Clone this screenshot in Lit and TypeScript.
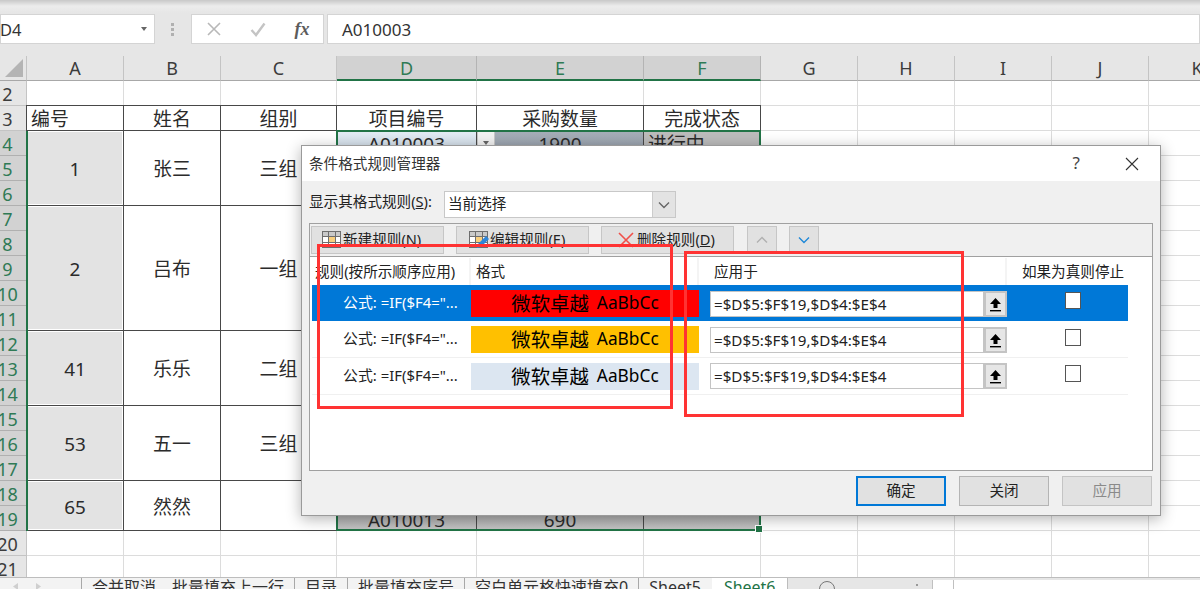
import { LitElement, html, css, svg, nothing } from "lit";
import { customElement } from "lit/decorators.js";

const COLS = ["A", "B", "C", "D", "E", "F", "G", "H", "I", "J", "K"];
const ROWS = Array.from({ length: 20 }, (_, i) => i + 2);
const MERGED: [number, number, string, string, string][] = [
  [4, 3, "1", "张三", "三组"],
  [7, 5, "2", "吕布", "一组"],
  [12, 3, "41", "乐乐", "二组"],
  [15, 3, "53", "五一", "三组"],
  [18, 2, "65", "然然", ""],
];
const RULES = [
  { cls: "sel", sw: "red" },
  { cls: "", sw: "amber" },
  { cls: "", sw: "pale" },
];

const gridIcon = (pencil: boolean) => html`<svg class="tool-ic" width="22" height="20" viewBox="0 0 22 20">
  <rect x="1.5" y="1.5" width="18" height="16" fill="#fff" stroke="#6e6e6e"></rect>
  <rect x="2" y="2" width="17" height="4" fill="#c9c9c9"></rect>
  <rect x="7.5" y="6.5" width="7" height="6" fill="#f8cf7e" stroke="#e39a36"></rect>
  <path d="M1.5 6.5H19.5M1.5 12.5H19.5M7.5 1.5V17.5M14.5 1.5V17.5" fill="none" stroke="#6e6e6e"></path>
  ${pencil ? svg`<path d="M9 18l1-4 8-8 3 3-8 8z" fill="#2f86d8"></path>` : nothing}
</svg>`;

@customElement("app-root")
export class AppRoot extends LitElement {
  static styles = css`
    :host {
      display: block;
      width: 1200px;
      height: 589px;
      overflow: hidden;
      position: relative;
      background: #fff;
      font-family: "Noto Sans", "Noto Sans CJK SC", sans-serif;
      color: #2b2b2b;
    }
    .fbar {
      height: 56px;
      box-sizing: border-box;
      padding: 14px 0 12px;
      display: flex;
      background: linear-gradient(#c8c8c8 0, #ececec 6px, #e6e6e6 13px);
    }
    .box {
      background: #fff;
      border: 1px solid #d4d4d4;
      box-sizing: border-box;
      display: flex;
      align-items: center;
      height: 30px;
      font-size: 16.5px;
      color: #333;
    }
    .name { width: 155px; justify-content: space-between; padding-right: 7px; }
    .name span:first-child { margin-left: -1px; }
    .caret { width: 0; height: 0; border: 3.5px solid transparent; border-top: 4px solid #666; border-bottom: 0; }
    .dots { width: 35px; padding-right: 1px; box-sizing: content-box; display: flex; flex-direction: column; align-items: center; justify-content: center; gap: 2px; }
    .dots i { width: 3px; height: 3px; background: #b0b0b0; }
    .fx { width: 133px; display: grid; grid-template-columns: repeat(3, 44px); justify-items: center; margin-right: 3px; }
    .fx b { font: italic 700 18px "Liberation Serif", serif; color: #5c5c5c; }
    .formula { flex: 1; padding-left: 14px; font-size: 17px; }

    .sheet {
      height: 521px;
      overflow: hidden;
      display: grid;
      position: relative;
      grid-template-columns: 27px 97px 97px 116px 140px 167px 117px 97px 97px 97px 97px 97px;
      grid-auto-rows: 25px;
      font-size: 18.9px;
      line-height: 1;
    }
    .corner {
      background: #e6e6e6;
      border-right: 1px solid #c4c4c4;
      border-bottom: 1px solid #a8a8a8;
      box-sizing: border-box;
      display: flex;
      padding: 3px;
      justify-content: flex-end;
      align-items: flex-end;
    }
    .ch {
      background: #e6e6e6;
      border-right: 1px solid #c4c4c4;
      border-bottom: 1px solid #a8a8a8;
      box-sizing: border-box;
      display: flex;
      align-items: center;
      justify-content: center;
      font-size: 18px;
      color: #3c3c3c;
    }
    .ch.on { background: #d2d2d2; color: #2f7a55; border-bottom: 2px solid #217346; border-right-color: #b4b4b4; }
    .rh {
      background: #e6e6e6;
      border-bottom: 1px solid #c4c4c4;
      border-right: 1px solid #c4c4c4;
      box-sizing: border-box;
      padding: 1px 11px 0 0;
      display: flex;
      align-items: center;
      justify-content: center;
      font-size: 18px;
      color: #3c3c3c;
      overflow: hidden;
    }
    .rh.on { background: #d2d2d2; color: #2f7a55; border-bottom-color: #b0b0b0; }
    .c {
      border-right: 1px solid #dcdcdc;
      border-bottom: 1px solid #dcdcdc;
      box-sizing: border-box;
    }
    .t {
      border: 1px solid #484848;
      margin: -1px 0 0 -1px;
      display: flex;
      align-items: center;
      justify-content: center;
      padding-top: 3px;
      background: #fff;
      box-sizing: border-box;
      white-space: nowrap;
      overflow: hidden;
    }
    .t.left { justify-content: flex-start; padding-left: 4px; }
    .t.shade { background: #e3e3e3; box-shadow: inset 0 0 0 1px #fff; }
    .t.d4 { background: linear-gradient(#e4edf5, #cbd8e4); }
    .t.e4 { background: linear-gradient(#a6afb9, #959ea9); position: relative; }
    .t.f4 { background: #bcbcbc; }
    .t.low { background: linear-gradient(#a2a2a2, #c4c4c4); padding-top: 5px; }
    .drop {
      position: absolute;
      left: 0;
      top: 0;
      width: 18px;
      height: 24px;
      background: #f2f2f2;
      border: 1px solid #c8c8c8;
      box-sizing: border-box;
      display: flex;
      align-items: center;
      justify-content: center;
    }
    .sel-a { grid-column: 2; grid-row: 4 / 20; border-left: 2px solid #217346; margin-left: -1px; pointer-events: none; }
    .sel-d { grid-column: 5 / 8; grid-row: 4 / 20; border: 2px solid #217346; margin: -1px 0 0 -1px; position: relative; }
    .handle { position: absolute; right: -4px; bottom: -4px; width: 6px; height: 6px; background: #217346; border: 1px solid #fff; }

    .tabs {
      height: 12px;
      background: #f3f3f3;
      border-top: 1px solid #bdbdbd;
      box-sizing: border-box;
      display: flex;
      font-size: 16px;
      line-height: 19px;
      color: #333;
      overflow: hidden;
    }
    .nav { width: 81px; flex: none; display: flex; gap: 18px; padding: 5px 0 0 12px; box-sizing: border-box; }
    .nav svg { display: block; }
    .tab { padding: 0 10px; white-space: nowrap; border-left: 1px solid #a8a8a8; height: 24px; box-sizing: border-box; }
    .tab b { font-weight: 400; margin-right: 16px; }
    .tab.s5 { padding-right: 11px; }
    .tab.active { background: #fff; color: #217346; border: 0; padding: 0 11px 0 12px; margin-top: -1px; line-height: 21px; }
    .rest { flex: 1; background: #e6e6e6; display: flex; border-left: 1px solid #bdbdbd; position: relative; }
    .plus { width: 16px; height: 16px; margin: 3px 0 0 31px; border: 1px solid #777; border-radius: 50%; box-sizing: border-box; flex: none; }
    .vd { width: 2px; height: 2px; background: #999; margin: 6px 0 0 81px; flex: none; }
    .hs { margin: 2px 0 0 14px; background: #fff; flex: 1; border-left: 1px solid #c0c0c0; }
    .hs i { display: block; width: 20px; height: 20px; border-right: 1px solid #c0c0c0; }

    .dlg {
      position: absolute;
      left: 301px;
      top: 145px;
      width: 860px;
      height: 371px;
      box-sizing: border-box;
      background: #f0f0f0;
      border: 1px solid #9a9a9a;
      box-shadow: 0 3px 14px rgba(0, 0, 0, 0.3);
      font-size: 14.6px;
      line-height: 1.2;
      color: #222;
      display: flex;
      flex-direction: column;
    }
    .title {
      height: 35px;
      flex: none;
      background: #fff;
      display: flex;
      align-items: center;
      padding-left: 7px;
      color: #333;
    }
    .title .sp { flex: 1; }
    .q { font-size: 17px; color: #444; margin-right: 45px; }
    .x { margin-right: 21px; display: block; }
    .pick { display: flex; align-items: center; padding: 10px 0 0 8px; height: 27px; flex: none; }
    .pick label { width: 134px; padding-bottom: 5px; margin-left: -1px; margin-right: 1px; }
    .select {
      width: 232px;
      height: 27px;
      box-sizing: border-box;
      background: #fff;
      border: 1px solid #c8c8c8;
      display: flex;
      align-items: center;
      justify-content: space-between;
      padding-left: 3px;
    }
    .select > span:first-child { padding-bottom: 2px; }
    .select .btn { width: 22px; height: 25px; background: #e3e3e3; border-left: 1px solid #ccc; display: flex; align-items: center; justify-content: center; }
    .panel {
      margin: 5px 7px 0 7px;
      height: 248px;
      flex: none;
      box-sizing: border-box;
      border: 1px solid #a0a0a0;
      display: flex;
      flex-direction: column;
    }
    .tools { height: 32px; flex: none; display: flex; padding: 2px 0 0 1px; box-sizing: border-box; gap: 12px; }
    .tbtn {
      height: 28px;
      width: 133px;
      box-sizing: border-box;
      background: #e1e1e1;
      border: 1px solid #c6c6c6;
      display: flex;
      align-items: center;
      justify-content: flex-start;
      padding-left: 9px;
      white-space: nowrap;
      overflow: hidden;
    }
    .tbtn.edit { padding-left: 11px; }
    .tbtn.del { padding-left: 16px; gap: 3px; }
    .tbtn.mini { width: 30px; padding: 0; justify-content: center; }
    .tbtn.first { margin-left: 1px; }
    .tool-ic { flex: none; }
    .list {
      flex: 1;
      background: #fff;
      border-top: 1px solid #a0a0a0;
      padding: 1px 0 0 2px;
    }
    .grid { display: grid; width: 816px; grid-template-columns: 159px 228px 11px 297px 11px 110px; align-items: stretch; }
    .head { height: 27px; }
    .head > div { display: flex; align-items: center; padding-left: 4px; border-right: 2px solid #f4f4f4; white-space: nowrap; box-sizing: border-box; }
    .head > div:first-child { padding-left: 3px; }
    .head .fmt { padding-left: 5px; }
    .head .stop { padding: 0; justify-content: center; border: 0; }
    .head .gap { padding: 0; border: 0; }
    .row { height: 37px; border-bottom: 1px solid #f0f0f0; box-sizing: border-box; }
    .row.sel { background: #0078d7; color: #fff; height: 36px; border: 0; }
    .rule { padding: 0 0 0 31px; display: flex; align-items: center; white-space: nowrap; font-size: 14.9px; }
    .swatch { margin: 5px 0 4px; display: flex; align-items: center; justify-content: center; gap: 8px; font-size: 17.3px; color: #000; }
    .swatch b { font-weight: 400; font-size: 19.4px; }
    .red { background: #ff0000; }
    .amber { background: #ffc000; }
    .pale { background: #dce6f1; }
    .range { display: flex; margin: 6px 0 4px; color: #222; font-size: 15.2px; }
    .row:last-child .range { margin: 5px 0 5px; }
    .range div { flex: 1; background: #fff; border: 1px solid #c4c4c4; box-sizing: border-box; padding: 1px 0 0 3px; display: flex; align-items: center; }
    .range .up { width: 23px; flex: none; padding: 0; justify-content: center; background: #e6e6e6; border: 2px solid #c4c4c4; }
    .chk { display: flex; justify-content: center; padding-top: 8px; box-sizing: border-box; }
    .row.sel .chk, .row:last-child .chk { padding-top: 7px; }
    .chk i { width: 16px; height: 17px; box-sizing: border-box; display: block; background: #fff; border: 1px solid #555; }
    .foot { display: flex; justify-content: flex-end; gap: 13px; padding: 5px 8px 0 0; }
    .fbtn { width: 90px; height: 30px; box-sizing: border-box; background: #e1e1e1; border: 1px solid #b4b4b4; display: flex; align-items: center; justify-content: center; }
    .fbtn.def { border: 2px solid #0078d7; }
    .fbtn.off { color: #8a8a8a; border-color: #c4c4c4; }

    .mark { position: absolute; box-sizing: border-box; border: 3px solid #ff3333; pointer-events: none; }
    .m1 { left: 317px; top: 244px; width: 356px; height: 165px; }
    .m2 { left: 684px; top: 251px; width: 280px; height: 166px; }
    u { text-underline-offset: 1px; }
  `;

  private renderSheet() {
    const cells = [];
    cells.push(html`<div class="corner"><svg width="18" height="18" viewBox="0 0 18 18"><polygon points="18,0 18,18 0,18" fill="#b4b4b4"></polygon></svg></div>`);
    for (const c of COLS) {
      const on = c === "D" || c === "E" || c === "F";
      cells.push(html`<div class="ch ${on ? "on" : ""}">${c}</div>`);
    }
    cells.push(html`<div></div>`);
    for (const r of ROWS) {
      const on = r >= 4 && r <= 19;
      cells.push(html`<div class="rh ${on ? "on" : ""}" style="grid-column:1;grid-row:${r}">${r}</div>`);
      for (let i = 0; i < 12; i++) {
        const inTable = r >= 3 && r <= 19 && i < 6;
        if (!inTable) cells.push(html`<div class="c" style="grid-column:${i + 2};grid-row:${r}"></div>`);
      }
    }
    const place = (col: number, row: number, span = 1) => `grid-column:${col};grid-row:${row} / span ${span}`;
    const head = ["编号", "姓名", "组别", "项目编号", "采购数量", "完成状态"];
    head.forEach((h, i) => cells.push(html`<div class="t ${i === 0 ? "left" : ""}" style=${place(i + 2, 3)}>${h}</div>`));
    for (const [row, span, a, b, c] of MERGED) {
      cells.push(html`<div class="t shade" style=${place(2, row, span)}>${a}</div>`);
      cells.push(html`<div class="t" style=${place(3, row, span)}>${b}</div>`);
      cells.push(html`<div class="t" style=${place(4, row, span)}>${c}</div>`);
    }
    cells.push(html`<div class="t d4" style=${place(5, 4)}>A010003</div>`);
    cells.push(html`<div class="t e4" style=${place(6, 4)}>
      <span class="drop"><span class="caret"></span></span>1900</div>`);
    cells.push(html`<div class="t f4 left" style=${place(7, 4)}>进行中</div>`);
    cells.push(html`<div class="t low" style=${place(5, 19)}>A010013</div>`);
    cells.push(html`<div class="t low" style=${place(6, 19)}>690</div>`);
    cells.push(html`<div class="t low" style=${place(7, 19)}></div>`);
    cells.push(html`<div class="sel-a"></div>`);
    cells.push(html`<div class="sel-d"><span class="handle"></span></div>`);
    return cells;
  }

  private renderDialog() {
    const chev = (c: string, d: string) => html`<svg width="14" height="8" viewBox="0 0 14 8"><path d=${d} fill="none" stroke=${c} stroke-width="1.4"></path></svg>`;
    const upload = html`<svg width="13" height="15" viewBox="0 0 13 15"><path d="M6.5 1L12 7H8.5V11H4.5V7H1Z" fill="#000"></path><rect x="1" y="13" width="11" height="1.4" fill="#000"></rect></svg>`;
    return html`<div class="dlg">
      <div class="title">
        <span>条件格式规则管理器</span><span class="sp"></span>
        <span class="q">?</span>
        <svg class="x" width="14" height="14" viewBox="0 0 14 14"><path d="M1 1L13 13M13 1L1 13" stroke="#333" stroke-width="1.1" fill="none"></path></svg>
      </div>
      <div class="pick">
        <label>显示其格式规则(<u>S</u>):</label>
        <div class="select"><span>当前选择</span><span class="btn">${chev("#666", "M2 1.5L7 6.5L12 1.5")}</span></div>
      </div>
      <div class="panel">
        <div class="tools">
          <div class="tbtn">${gridIcon(false)}<span>新建规则(<u>N</u>)</span></div>
          <div class="tbtn edit">${gridIcon(true)}<span>编辑规则(<u>E</u>)</span></div>
          <div class="tbtn del">
            <svg class="tool-ic" width="16" height="16" viewBox="0 0 16 16"><path d="M1 1L15 15M15 1L1 15" stroke="#f0504a" stroke-width="1.6" fill="none"></path></svg>
            <span>删除规则(<u>D</u>)</span></div>
          <div class="tbtn mini first">${chev("#b0b0b0", "M2 6.5L7 1.5L12 6.5")}</div>
          <div class="tbtn mini">${chev("#1e88d8", "M2 1.5L7 6.5L12 1.5")}</div>
        </div>
        <div class="list">
          <div class="grid head">
            <div>规则(按所示顺序应用)</div><div class="fmt">格式</div><div class="gap"></div><div>应用于</div><div class="gap"></div><div class="stop">如果为真则停止</div>
          </div>
          ${RULES.map(
            (r) => html`<div class="grid row ${r.cls}">
              <div class="rule">公式: =IF($F4="...</div>
              <div class="swatch ${r.sw}"><b>微软卓越</b><span>AaBbCc</span></div>
              <div></div>
              <div class="range"><div>=$D$5:$F$19,$D$4:$E$4</div><div class="up">${upload}</div></div>
              <div></div>
              <div class="chk"><i></i></div>
            </div>`
          )}
        </div>
      </div>
      <div class="foot">
        <div class="fbtn def">确定</div>
        <div class="fbtn">关闭</div>
        <div class="fbtn off">应用</div>
      </div>
    </div>`;
  }

  render() {
    return html`
      <div class="fbar">
        <div class="box name"><span>D4</span><span class="caret"></span></div>
        <div class="dots"><i></i><i></i><i></i></div>
        <div class="box fx">
          <svg width="16" height="16" viewBox="0 0 16 16"><path d="M2 2L14 14M14 2L2 14" stroke="#b8b8b8" stroke-width="1.6" fill="none"></path></svg>
          <svg width="16" height="16" viewBox="0 0 16 16"><path d="M1.5 9L6 14L14.5 2.5" stroke="#c4c4c4" stroke-width="2.4" fill="none"></path></svg>
          <b>fx</b>
        </div>
        <div class="box formula">A010003</div>
      </div>
      <div class="sheet">${this.renderSheet()}</div>
      <div class="tabs">
        <div class="nav">
          <svg width="6" height="7" viewBox="0 0 6 7"><polygon points="6,0 6,7 1,3.5" fill="#cfcfcf"></polygon></svg>
          <svg width="6" height="7" viewBox="0 0 6 7"><polygon points="0,0 0,7 5,3.5" fill="#cfcfcf"></polygon></svg>
        </div>
        <span class="tab"><b>合并取消</b>批量填充上一行</span>
        <span class="tab">目录</span>
        <span class="tab">批量填充序号</span>
        <span class="tab">空白单元格快速填充0</span>
        <span class="tab s5">Sheet5</span>
        <span class="tab active">Sheet6</span>
        <div class="rest"><span class="plus"></span><span class="vd"></span><div class="hs"><i></i></div></div>
      </div>
      ${this.renderDialog()}
      <div class="mark m1"></div>
      <div class="mark m2"></div>
    `;
  }
}
